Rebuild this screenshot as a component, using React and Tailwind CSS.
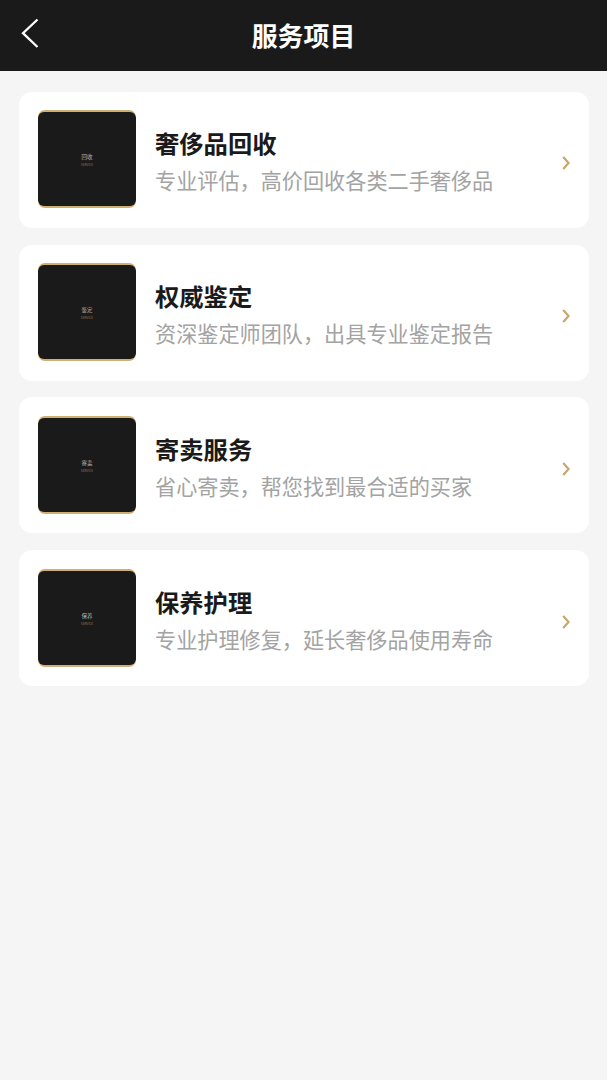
const services = [
    { title: "奢侈品回收", desc: "专业评估，高价回收各类二手奢侈品", tag: "回收" },
    { title: "权威鉴定", desc: "资深鉴定师团队，出具专业鉴定报告", tag: "鉴定" },
    { title: "寄卖服务", desc: "省心寄卖，帮您找到最合适的买家", tag: "寄卖" },
    { title: "保养护理", desc: "专业护理修复，延长奢侈品使用寿命", tag: "保养" },
];

function ServiceCard({ title, desc, tag }) {
    return (
        <div className="flex h-[136px] items-center rounded-[13px] bg-white pl-[19px] pr-[19.5px]">
            {/* thumbnail */}
            <div className="mb-[1px] flex h-[98px] w-[98px] shrink-0 flex-col justify-center overflow-hidden rounded-[7px] bg-[#d0ae74]">
                <div className="flex h-[93.6px] flex-col items-center justify-center rounded-[6px] bg-[#1a1a1a] pt-[3px]">
                    <span className="text-[5.5px] leading-[7px] text-[#b5b5b5]">{tag}</span>
                    <span className="mt-[1px] text-[3.2px] leading-[5px] text-[#8f7a50]">SERVICE</span>
                </div>
            </div>

            <div className="ml-[19px] min-w-0 flex-1 pt-[2px]">
                <h3 className="text-[24.3px] font-bold leading-[36px] text-[#1a1a1a]">{title}</h3>
                <p className="mt-[3px] text-[21.15px] leading-[32px] text-[#a3a3a3]">{desc}</p>
            </div>

            {/* chevron sits a little below the card's centre */}
            <svg className="mt-[7px] shrink-0 text-[#c9a66b]" width="8" height="14" viewBox="0 0 8 14" fill="none">
                <path d="M1.2 1 L6.6 7 L1.2 13" stroke="currentColor" strokeWidth="2.2" />
            </svg>
        </div>
    );
}

export default function App() {
    return (
        <div
            className="min-h-[1080px] bg-[#f5f5f5]"
            style={{ fontFamily: '"Noto Sans CJK SC", "Noto Sans", sans-serif' }}
        >
            {/* top bar */}
            <header className="relative flex h-[71px] items-center justify-center bg-[#1a1a1a]">
                <button className="absolute left-[20px] top-[18px] text-white">
                    <svg width="20" height="30" viewBox="0 0 20 30" fill="none">
                        <path d="M17.5 1.5 L3 15.2 L17.5 29" stroke="currentColor" strokeWidth="2.3" />
                    </svg>
                </button>
                <h1 className="text-[25.9px] font-bold text-white">服务项目</h1>
            </header>

            <main className="flex flex-col gap-[16.85px] pl-[19px] pr-[18px] pt-[20.7px]">
                {services.map((s) => (
                    <ServiceCard key={s.title} {...s} />
                ))}
            </main>
        </div>
    );
}
